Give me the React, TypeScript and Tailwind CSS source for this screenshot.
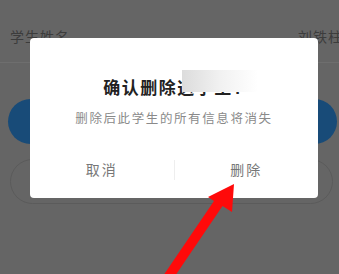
export default function App() {
  return (
    <div
      className="relative w-[339px] h-[274px] overflow-hidden bg-[#656565]"
      style={{ fontFamily: '"Liberation Sans", "Noto Sans CJK SC", sans-serif' }}
    >
      {/* Page behind the dim layer */}
      <div className="flex justify-between pl-[10px] pt-[29px] text-[14px] leading-[16px] text-[#3c3c3c] tracking-[1px] whitespace-nowrap">
        <span>学生姓名</span>
        <span className="-mr-[4px]">刘铁柱</span>
      </div>
      <div className="mt-[17px] h-px bg-[#6e6e6e]" />
      <div className="mx-[8px] mr-[2px] mt-[36px] h-[45px] rounded-full bg-[#184b78]" />
      <div className="mx-[10px] mr-[6px] mt-[15px] h-[45px] rounded-full border border-[#5b5b5b]" />

      {/* Dialog */}
      <div className="absolute left-[30px] top-[38px] w-[288px] h-[160px] rounded-[4px] bg-white flex flex-col">
        <div className="relative mt-[42px] text-center text-[17px] leading-[18px] font-bold text-[#222] tracking-[1.5px]">
          确认删除这学生?
          <div className="absolute left-[152px] top-[-10px] w-[76px] h-[22px] bg-gradient-to-r from-[#dcdcdc] via-[#f1f1f1] to-white" />
        </div>
        <div className="mt-[14px] text-center text-[12.5px] leading-[14px] text-[#8a8a8a] tracking-[1.6px]">
          删除后此学生的所有信息将消失
        </div>
        <div className="mt-auto mb-[18px] flex items-center">
          <div className="flex-1 text-center text-[14px] leading-[16px] text-[#777] tracking-[2px]">取消</div>
          <div className="w-px h-[20px] bg-[#eeeeee]" />
          <div className="flex-1 text-center text-[14px] leading-[16px] text-[#777] tracking-[2px]">删除</div>
        </div>
      </div>

      {/* Red arrow */}
      <svg className="absolute left-0 top-0" width="339" height="274" viewBox="0 0 339 274">
        <polygon
          points="234,184 232,212 222.5,206 175,276 163,276 214,201 208,197"
          fill="#ff0a0a"
        />
      </svg>
    </div>
  );
}
